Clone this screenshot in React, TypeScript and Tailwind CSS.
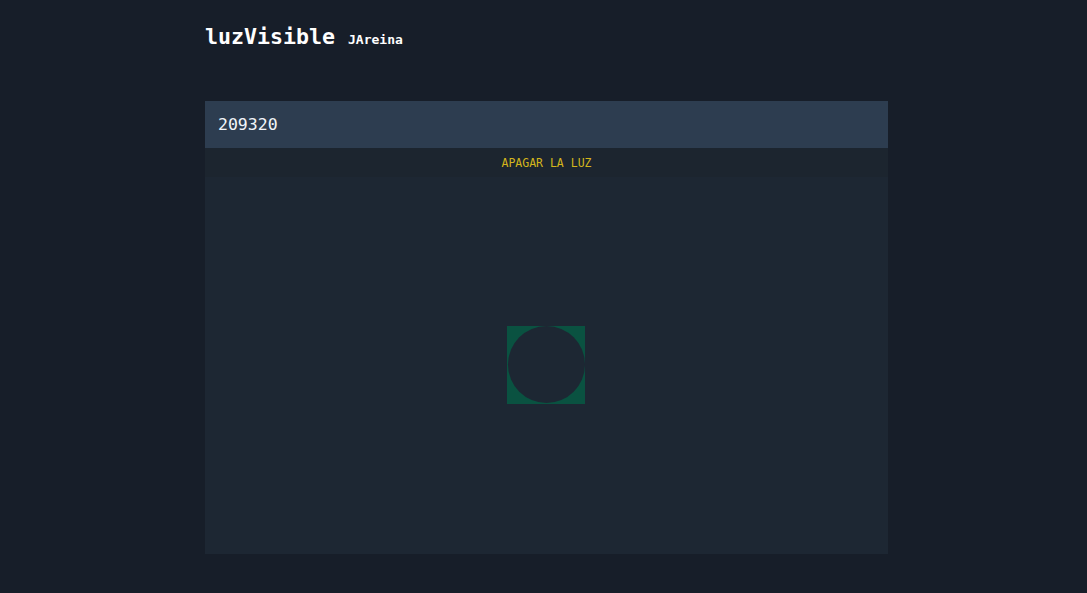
import React from "react";

export default function App() {
  return (
    <div
      className="min-h-[593px] w-full bg-[#171e29] text-white"
      style={{ fontFamily: '"DejaVu Sans Mono", "Liberation Mono", monospace' }}
    >
      <div className="ml-[205px] w-[683px] pt-[22px]">
        <div className="flex items-baseline gap-[13px] h-[30px]">
          <span className="text-[21.6px] font-bold leading-[30px]">luzVisible</span>
          <span className="text-[13px] font-bold">JAreina</span>
        </div>
        <div className="mt-[49px] flex h-[453px] flex-col">
          <div className="flex h-[47px] items-center bg-[#2d3d50] px-[13px] pt-[2px] text-[16.5px] text-[#f1f5f9]">
            209320
          </div>
          <div className="flex h-[29px] items-center justify-center bg-[#1c252f] pt-[2px] text-[11.5px] text-[#d4b51c]">
            APAGAR LA LUZ
          </div>
          <div className="flex flex-1 items-center justify-center bg-[#1d2733] pr-[1px] pb-[2px]">
            <div className="flex h-[78px] w-[78px] items-center justify-center bg-[#0a5241]">
              <div className="h-[77px] w-[77px] rounded-full bg-[#1d2733]" />
            </div>
          </div>
        </div>
      </div>
    </div>
  );
}
